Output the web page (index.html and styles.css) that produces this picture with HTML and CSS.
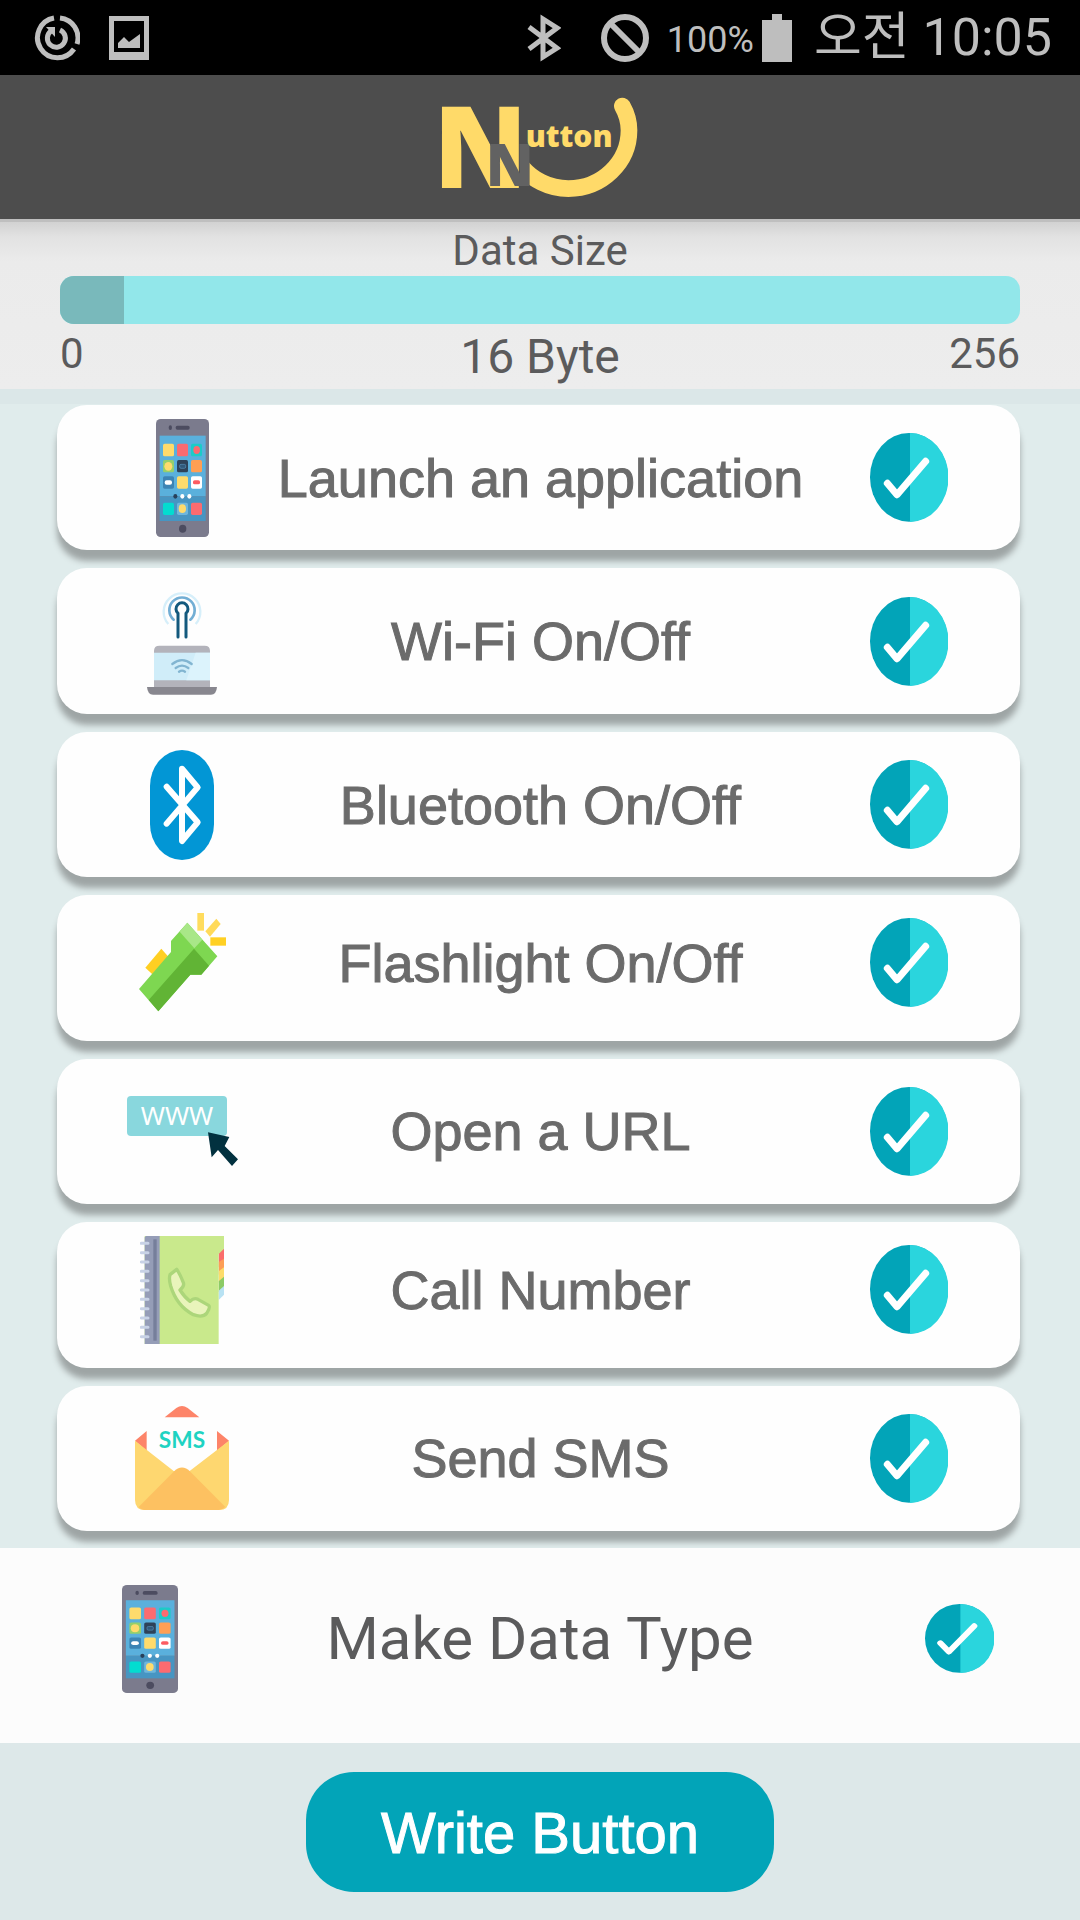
FILE: index.html
```html
<!DOCTYPE html>
<html lang="en">
<head>
<meta charset="utf-8">
<meta name="viewport" content="width=device-width, initial-scale=1">
<title>Nutton</title>
<link rel="stylesheet" href="styles.css">
</head>
<body>
<svg class="sprite" aria-hidden="true">
  <symbol id="phone" viewBox="0 0 159 354" preserveAspectRatio="none">
    <rect width="159" height="354" rx="14" fill="#7b7b8d"/>
    <ellipse cx="43" cy="26" rx="5" ry="7" fill="#4c4c60"/>
    <rect x="59" y="20" width="42" height="12" rx="5" fill="#4c4c60"/>
    <rect x="11" y="50" width="138" height="182" fill="#5ab0dc"/>
    <rect x="11" y="232" width="138" height="74" fill="#4795c2"/>
    <rect x="21" y="74" width="33" height="38" rx="5" fill="#fedb6c"/>
    <rect x="63" y="74" width="33" height="38" rx="5" fill="#fb6b70"/>
    <rect x="105" y="74" width="33" height="38" rx="5" fill="#1ccbc8"/>
    <ellipse cx="122" cy="93" rx="10" ry="12" fill="#fb6b70"/>
    <rect x="21" y="123" width="33" height="37" rx="5" fill="#94cf6c"/>
    <ellipse cx="37" cy="142" rx="12" ry="13" fill="#fedb6c"/>
    <rect x="63" y="123" width="33" height="37" rx="5" fill="#2e4259"/>
    <rect x="71" y="136" width="18" height="12" rx="4" fill="#31597b" stroke="#5790b8" stroke-width="2"/>
    <rect x="105" y="123" width="33" height="37" rx="5" fill="#ff9f54"/>
    <rect x="21" y="172" width="33" height="37" rx="5" fill="#3c84b4"/>
    <rect x="26" y="184" width="22" height="13" rx="6" fill="#fff"/>
    <rect x="63" y="172" width="33" height="37" rx="5" fill="#fedb6c"/>
    <rect x="105" y="172" width="33" height="37" rx="5" fill="#fff"/>
    <rect x="111" y="184" width="21" height="12" rx="5" fill="#fb5c62"/>
    <ellipse cx="58" cy="232" rx="6" ry="7" fill="#28405a"/>
    <ellipse cx="79" cy="232" rx="6" ry="7" fill="#fff"/>
    <ellipse cx="100" cy="232" rx="6" ry="7" fill="#fff"/>
    <rect x="21" y="251" width="33" height="37" rx="5" fill="#03dcd0"/>
    <rect x="63" y="251" width="33" height="37" rx="5" fill="#6eb6dc"/>
    <ellipse cx="79" cy="269" rx="11" ry="13" fill="#fedb6c"/>
    <rect x="105" y="251" width="33" height="37" rx="5" fill="#fb6b70"/>
    <ellipse cx="80" cy="329" rx="11" ry="12" fill="#4c4c60"/>
  </symbol>
  <symbol id="check" viewBox="0 0 234 267" preserveAspectRatio="none">
    <ellipse cx="117" cy="133" rx="117" ry="133" fill="#02a4b8"/>
    <path d="M120 0A115 133 0 0 1 120 267Z" fill="#2ad5dd"/>
    <path d="M52 151L81 185L167 85" fill="none" stroke="#fff" stroke-width="21" stroke-linecap="round" stroke-linejoin="round"/>
  </symbol>
</svg>

<header class="status">
  <div class="status-left">
    <svg width="46" height="46" viewBox="0 0 46 46" fill="none" stroke="#bebebe">
      <path d="M20 3A20 20 0 1 0 40 34" stroke-width="5"/>
      <path d="M26 3A20 20 0 0 1 43 29" stroke-width="5"/>
      <path d="M17 16A9 9 0 1 0 26 15" stroke-width="5"/>
      <path d="M12 12H21V22Z" fill="#bebebe" stroke="none"/>
    </svg>
    <svg width="40" height="44" viewBox="0 0 40 44" fill="#bebebe">
      <path fill-rule="evenodd" d="M0 0H40V44H0ZM5 5V36H35V5Z"/>
      <path d="M9 32V27L15 21L20 26L31 18V32Z"/>
    </svg>
  </div>
  <div class="status-right">
    <svg width="34" height="48" viewBox="0 0 34 48" fill="none" stroke="#bebebe" stroke-width="5">
      <path d="M2 13L30 34L16 43V5L30 14L2 35"/>
    </svg>
    <svg class="blocked" width="48" height="48" viewBox="0 0 48 48" fill="none" stroke="#bebebe" stroke-width="6">
      <circle cx="24" cy="24" r="21"/><path d="M9 9L39 39"/>
    </svg>
    <span class="percent">100%</span>
    <svg class="battery" width="30" height="48" viewBox="0 0 30 48" fill="#bebebe"><path d="M10 0H20V6H30V48H0V6H10Z"/></svg>
    <time class="clock">오전 10:05</time>
  </div>
</header>

<div class="appbar">
  <svg class="logo" width="240" height="140" viewBox="60 -10 720 420" role="img" aria-label="Nutton">
    <defs><clipPath id="tail"><rect x="388" y="40" width="340" height="330"/></clipPath></defs>
    <g clip-path="url(#tail)">
      <path d="M360 253A182 182 0 0 0 505 325A182 175 0 0 0 687 150Q687 112 667 77" fill="none" stroke="#ffda69" stroke-width="50" stroke-linecap="round"/>
    </g>
    <text class="logo-big" x="100" y="322">N</text>
    <text class="logo-small" x="257" y="316">N</text>
    <text class="logo-word" x="377" y="200">utton</text>
  </svg>
</div>

<section class="size">
  <h1 class="size-title" id="size-title">Data Size</h1>
  <div class="bar" role="progressbar" aria-labelledby="size-title" aria-valuemin="0" aria-valuemax="256" aria-valuenow="16">
    <div class="bar-fill" style="width: 6.7%"></div>
  </div>
  <div class="scale">
    <span>0</span>
    <span class="scale-value">16 Byte</span>
    <span class="scale-max">256</span>
  </div>
</section>

<main class="list">
  <button class="card" type="button">
    <svg class="icon" width="53" height="118"><use href="#phone"/></svg>
    <span class="label">Launch an application</span>
    <svg class="tick" width="78" height="89"><use href="#check"/></svg>
  </button>
  <button class="card" type="button">
    <svg class="icon" width="70" height="108" viewBox="0 0 210 324" fill="none">
      <path d="M64 111A55 55 0 1 1 146 111" stroke="#d6effa" stroke-width="7"/>
      <path d="M80 98A38 38 0 1 1 130 98" stroke="#72aed4" stroke-width="8" stroke-linecap="round"/>
      <path d="M93 150V79A18 18 0 1 1 117 79V150" stroke="#13597d" stroke-width="9" stroke-linecap="round"/>
      <path d="M21 304V192Q21 176 37 176H173Q189 176 189 192V304Z" fill="#b3b3bb"/>
      <path d="M21 197H189V280H21Z" fill="#d0edf9"/>
      <path d="M146 197H189V280H118Z" fill="#dcf3fc"/>
      <path d="M76 231Q105 208 134 231M86 243Q105 229 124 243M96 254Q105 248 114 254" stroke="#82b5d1" stroke-width="7" stroke-linecap="round"/>
      <path d="M0 300H210Q208 323 192 323H18Q2 323 0 300Z" fill="#88878f"/>
    </svg>
    <span class="label">Wi-Fi On/Off</span>
    <svg class="tick" width="78" height="89"><use href="#check"/></svg>
  </button>
  <button class="card" type="button">
    <svg class="icon" width="64" height="110" viewBox="0 0 192 330">
      <rect width="192" height="330" rx="96" ry="108" fill="#0296d5"/>
      <path d="M50 110L143 217L96 273V56L143 112L50 221" fill="none" stroke="#fff" stroke-width="18" stroke-linecap="round" stroke-linejoin="round"/>
    </svg>
    <span class="label">Bluetooth On/Off</span>
    <svg class="tick" width="78" height="89"><use href="#check"/></svg>
  </button>
  <button class="card card-raised" type="button">
    <svg class="icon" width="87" height="99" viewBox="0 0 261 297">
      <path d="M19 164L67 107L88 131L40 184Z" fill="#ffcf22"/>
      <path d="M0 228L96 117V84L145 29L235 130L187 185H154L58 295Z" fill="#7ed751"/>
      <path d="M29 261L165 107L210 158L187 185H154L58 295Z" fill="#61b435"/>
      <path d="M122 56L145 29L190 80L166 106Z" fill="#a9e788"/>
      <path d="M175 0H195V53H175Z" fill="#ffdc5d"/>
      <path d="M199 55L232 17L245 33L213 71Z" fill="#ffda59"/>
      <path d="M214 73H261V98H214Z" fill="#ffd023"/>
    </svg>
    <span class="label">Flashlight On/Off</span>
    <svg class="tick" width="78" height="89"><use href="#check"/></svg>
  </button>
  <button class="card" type="button">
    <svg class="icon" width="111" height="70" viewBox="0 0 333 210">
      <rect width="300" height="120" rx="12" fill="#89d7dd"/>
      <text class="icon-www" x="150" y="86">WWW</text>
      <path d="M243 109L307 123L293 150L333 190L315 210L273 162L254 184Z" fill="#02313f"/>
    </svg>
    <span class="label">Open a URL</span>
    <svg class="tick" width="78" height="89"><use href="#check"/></svg>
  </button>
  <button class="card card-raised" type="button">
    <svg class="icon" width="84" height="108" viewBox="0 0 252 324">
      <path d="M236 46L252 38V78L236 94Z" fill="#fa6d6c"/>
      <path d="M236 78L252 68V100L236 116Z" fill="#fd9e56"/>
      <path d="M236 106L252 94V126L236 140Z" fill="#fddc6b"/>
      <path d="M236 136L252 122V160L236 168Z" fill="#8ccb66"/>
      <path d="M236 164L252 150V176L236 192Z" fill="#b8e2f3"/>
      <path d="M14 0H252V38L236 54V324H14Z" fill="#c9e98c"/>
      <path d="M18 0H59V324H14V4Z" fill="#959db7"/>
      <path d="M45 10V314" stroke="#767f9b" stroke-width="10"/>
      <path d="M4 22H24M4 50H24M4 78H24M4 106H24M4 134H24M4 162H24M4 190H24M4 218H24M4 246H24M4 274H24M4 302H24" stroke="#c8d2e6" stroke-width="9" stroke-linecap="round"/>
      <path d="M90 116L110 100Q120 114 130 140Q134 150 120 162Q134 184 150 196Q162 184 174 190L206 208Q212 214 200 232Q188 246 160 236Q110 210 92 150Q86 128 90 116Z" fill="#e9f4bb" stroke="#acd67a" stroke-width="10" stroke-linejoin="round"/>
    </svg>
    <span class="label">Call Number</span>
    <svg class="tick" width="78" height="89"><use href="#check"/></svg>
  </button>
  <button class="card" type="button">
    <svg class="icon" width="94" height="104" viewBox="0 0 282 312">
      <path d="M89 34L124 6Q141-6 158 6L193 34Z" fill="#fd8469"/>
      <path d="M0 104L35 75V135ZM282 104L246 75V135Z" fill="#fd8469"/>
      <path d="M0 104L116 195H164L282 104V282Q282 312 252 312H30Q0 312 0 282Z" fill="#fed770"/>
      <path d="M11 303L116 197Q141 172 166 197L271 303Q262 312 250 312H30Q18 312 11 303Z" fill="#fdc161"/>
      <text class="icon-sms" x="141" y="125">SMS</text>
    </svg>
    <span class="label">Send SMS</span>
    <svg class="tick" width="78" height="89"><use href="#check"/></svg>
  </button>
</main>

<section class="current">
  <svg width="56" height="108"><use href="#phone"/></svg>
  <span class="current-label">Make Data Type</span>
  <svg class="tick" width="69" height="69"><use href="#check"/></svg>
</section>

<footer class="footer">
  <button class="write" type="button">Write Button</button>
</footer>
</body>
</html>
```
FILE: styles.css
```css
* {
  box-sizing: border-box;
}

body {
  display: flex;
  flex-direction: column;
  min-height: 100vh;
  margin: 0;
  background: #dde8e9;
  color: #5b5b5c;
  font-family: Roboto, "Noto Sans CJK KR", sans-serif;
}

svg {
  display: block;
}

.sprite {
  position: absolute;
  width: 0;
  height: 0;
}

/* System status bar */
.status {
  display: flex;
  align-items: center;
  justify-content: space-between;
  height: 75px;
  padding: 0 28px 0 34px;
  background: #000;
  color: #bebebe;
}

.status-left,
.status-right {
  display: flex;
  align-items: center;
}

.status-left {
  gap: 29px;
}

.blocked {
  margin-left: 40px;
}

.percent {
  margin-left: 18px;
  padding-top: 4px;
  font-size: 36px;
  line-height: 44px;
}

.battery {
  margin-left: 8px;
}

.clock {
  margin-left: 22px;
  font-size: 52px;
  line-height: 60px;
}

/* App bar */
.appbar {
  display: flex;
  align-items: center;
  justify-content: center;
  height: 144px;
  background: #4d4d4d;
}

.logo text {
  font-family: "Open Sans", sans-serif;
  font-weight: 800;
  fill: #ffda69;
}

.logo .logo-big {
  font-size: 339px;
}

.logo .logo-small {
  font-size: 173px;
  fill: #626262;
}

.logo .logo-word {
  font-size: 90px;
}

/* Data size gauge */
.size {
  padding: 7px 60px 0;
  background: linear-gradient(#bfbfbf, #bfbfbf 3px, #d2d2d2 3px, #e2e2e2 18px, #ebebeb 42px, #ededed);
}

.size-title {
  margin: 0;
  font-size: 42px;
  font-weight: 400;
  line-height: 50px;
  text-align: center;
}

.bar {
  height: 48px;
  overflow: hidden;
  border-radius: 14px;
  background: #92e7ea;
}

.bar-fill {
  height: 100%;
  background: #79b9bb;
}

.scale {
  display: grid;
  grid-template-columns: 1fr auto 1fr;
  font-size: 42px;
  line-height: 60px;
}

.scale-value {
  font-size: 48px;
  line-height: 65px;
}

.scale-max {
  text-align: right;
}

/* Action cards */
.list {
  display: grid;
  flex: 1;
  grid-auto-rows: 1fr;
  gap: 18px;
  padding: 16px 60px 17px 57px;
  background: linear-gradient(#dbe7e8, #dbe7e8 15px, #e0ecec 15px);
}

.card {
  display: grid;
  grid-template-columns: 110px 1fr 104px;
  align-items: center;
  padding: 0 72px 0 70px;
  border: 0;
  border-radius: 30px;
  background: #fefefe;
  box-shadow: 0 11px 6px #9ea5a5;
  color: #6b6b6b;
  cursor: pointer;
}

.card-raised {
  padding-bottom: 10px;
}

.icon {
  justify-self: center;
}

.label {
  font-family: "Liberation Sans", sans-serif;
  font-size: 54px;
  line-height: 74px;
  text-align: center;
  white-space: nowrap;
  -webkit-text-stroke: 1px currentColor;
}

.tick {
  justify-self: end;
}

.icon-www {
  font-family: "Noto Sans", sans-serif;
  font-size: 78px;
  text-anchor: middle;
  fill: #fff;
}

.icon-sms {
  font-family: Lato, sans-serif;
  font-size: 68px;
  font-weight: 700;
  text-anchor: middle;
  fill: #1fd3c2;
}

/* Selected data type */
.current {
  display: grid;
  grid-template-columns: 80px 1fr 116px;
  align-items: center;
  height: 195px;
  padding: 0 86px 14px 122px;
  background: #fcfcfc;
}

.current-label {
  font-size: 60px;
  line-height: 70px;
  text-align: center;
}

/* Footer */
.footer {
  display: flex;
  justify-content: center;
  padding: 29px 0 28px;
}

.write {
  width: 468px;
  height: 120px;
  padding: 0;
  border: 0;
  border-radius: 48px;
  background: #02a4b8;
  color: #fff;
  font-family: "Liberation Sans", sans-serif;
  font-size: 58px;
  -webkit-text-stroke: 1px currentColor;
  cursor: pointer;
}
```
